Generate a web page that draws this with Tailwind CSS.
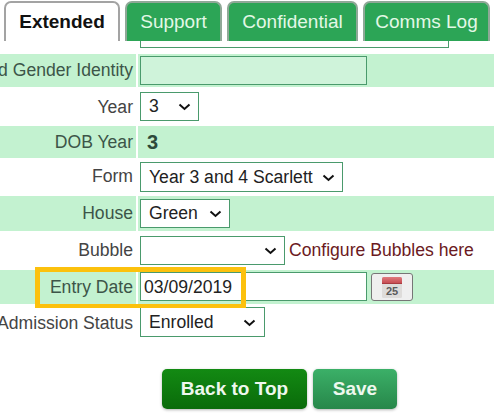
<!DOCTYPE html>
<html lang="en">
<head>
    <meta charset="UTF-8">
    <title>Extended</title>
    <script src="https://cdn.jsdelivr.net/npm/@tailwindcss/browser@4"></script>
</head>
<body class="bg-white w-[494px] h-[414px] overflow-hidden relative font-['Liberation_Sans',Arial,sans-serif] text-[17.6px] text-[#333]">
    <!-- tabs -->
    <div class="flex h-[41px] pt-[1px] pl-[4px] gap-[5px]">
        <div class="w-[116px] h-[40px] bg-white border-2 border-b-0 border-[#a3a3a3] rounded-t-[7px] flex items-center justify-center font-bold text-[#111] text-[19px]">Extended</div>
        <div class="w-[97px] h-[40px] bg-[#2ca556] border-2 border-b-0 border-[#8fa897] rounded-t-[7px] flex items-center justify-center text-[#e3f8e6] text-[19px]">Support</div>
        <div class="w-[131px] h-[40px] bg-[#2ca556] border-2 border-b-0 border-[#8fa897] rounded-t-[7px] flex items-center justify-center text-[#e3f8e6] text-[19px]">Confidential</div>
        <div class="w-[127px] h-[40px] bg-[#2ca556] border-2 border-b-0 border-[#8fa897] rounded-t-[7px] flex items-center justify-center text-[#e3f8e6] text-[19px]">Comms Log</div>
    </div>

    <!-- form rows -->
    <div class="flex h-[13px]">
        <div class="w-[136px]"></div>
        <div class="ml-[4px] w-[309px] h-[7px] border border-t-0 border-[#4a9a6c]"></div>
    </div>

    <div class="flex h-[33px] bg-[#c3f2d0]">
        <div class="w-[136px] shrink-0 flex justify-end items-center overflow-hidden whitespace-nowrap pr-[3px] text-[#3c5548]">Preferred Gender Identity</div>
        <div class="w-[2px] bg-white"></div>
        <div class="ml-[2px] mt-[2px] w-[227px] h-[29px] bg-[#cff3da] border border-[#4a9a6c]"></div>
    </div>

    <div class="flex h-[39px]">
        <div class="w-[136px] shrink-0 flex justify-end pt-[7px] pr-[3px] text-[#444]">Year</div>
        <div class="ml-[4px] mt-[5px] w-[59px] h-[29px] bg-white border border-[#4a9a6c] flex items-center justify-between pl-[8px] pr-[7px] text-[#222]">
            <span>3</span>
            <svg width="13" height="8" viewBox="0 0 13 8"><path d="M1.5 1.5 6.5 6 11.5 1.5" fill="none" stroke="#111" stroke-width="2"/></svg>
        </div>
    </div>

    <div class="flex h-[32px] bg-[#c3f2d0]">
        <div class="w-[136px] shrink-0 flex justify-end items-center pr-[3px] text-[#3c5548]">DOB Year</div>
        <div class="w-[2px] bg-white"></div>
        <div class="ml-[9px] flex items-center font-bold text-[20px] text-[#2d4a3a]">3</div>
    </div>

    <div class="flex h-[38px]">
        <div class="w-[136px] shrink-0 flex justify-end pt-[5px] pr-[3px] text-[#444]">Form</div>
        <div class="ml-[4px] mt-[4px] w-[203px] h-[30px] bg-white border border-[#4a9a6c] flex items-center justify-between pt-[1px] pl-[8px] pr-[7px] text-[#222]">
            <span class="whitespace-nowrap">Year 3 and 4 Scarlett</span>
            <svg width="13" height="8" viewBox="0 0 13 8"><path d="M1.5 1.5 6.5 6 11.5 1.5" fill="none" stroke="#111" stroke-width="2"/></svg>
        </div>
    </div>

    <div class="flex h-[35px] bg-[#c3f2d0]">
        <div class="w-[136px] shrink-0 flex justify-end pt-[4px] pr-[3px] text-[#3c5548]">House</div>
        <div class="w-[2px] bg-white"></div>
        <div class="ml-[2px] mt-[3px] w-[90px] h-[29px] bg-white border border-[#4a9a6c] flex items-center justify-between pl-[8px] pr-[7px] text-[#222]">
            <span>Green</span>
            <svg width="13" height="8" viewBox="0 0 13 8"><path d="M1.5 1.5 6.5 6 11.5 1.5" fill="none" stroke="#111" stroke-width="2"/></svg>
        </div>
    </div>

    <div class="flex h-[39px]">
        <div class="w-[136px] shrink-0 flex justify-end pt-[6px] pr-[3px] text-[#444]">Bubble</div>
        <div class="ml-[4px] mt-[5px] w-[145px] h-[29px] bg-white border border-[#4a9a6c] flex items-center justify-end pr-[7px]">
            <svg width="13" height="8" viewBox="0 0 13 8"><path d="M1.5 1.5 6.5 6 11.5 1.5" fill="none" stroke="#111" stroke-width="2"/></svg>
        </div>
        <div class="ml-[4px] pt-[6px] text-[#6b1a22] whitespace-nowrap">Configure Bubbles here</div>
    </div>

    <div class="flex h-[34px] bg-[#c3f2d0]">
        <div class="w-[136px] shrink-0 flex justify-end items-center pr-[3px] text-[#3c5548]">Entry Date</div>
        <div class="w-[2px] bg-white"></div>
        <div class="ml-[2px] mt-[2px] w-[227px] h-[29px] bg-white border border-[#4a9a6c] flex items-center pt-[1px] pl-[3px] text-[#222]">03/09/2019</div>
        <div class="ml-[4px] mt-[3px] w-[42px] h-[28px] bg-[#efefef] border border-[#767676] rounded-[3px] flex items-center justify-center">
            <svg width="22" height="23" viewBox="0 0 22 23">
                <defs>
                    <linearGradient id="calTop" x1="0" y1="0" x2="0" y2="1">
                        <stop offset="0" stop-color="#e07a7e"/>
                        <stop offset="1" stop-color="#c2454b"/>
                    </linearGradient>
                </defs>
                <rect x="1" y="1" width="20" height="21" rx="1.5" fill="#dedcda"/>
                <rect x="1" y="1" width="20" height="7" rx="1.5" fill="url(#calTop)"/>
                <rect x="1" y="7" width="20" height="1" fill="#a83b40"/>
                <text x="11" y="19" text-anchor="middle" font-family="Liberation Sans" font-weight="700" font-size="11" fill="#5a5a5a">25</text>
            </svg>
        </div>
    </div>

    <div class="flex h-[36px]">
        <div class="w-[136px] shrink-0 flex justify-end pt-[6px] pr-[3px] whitespace-nowrap text-[#444]">Admission Status</div>
        <div class="ml-[4px] mt-[3px] w-[125px] h-[30px] bg-white border border-[#4a9a6c] flex items-center justify-between pt-[1px] pl-[8px] pr-[8px] text-[#222]">
            <span>Enrolled</span>
            <svg width="13" height="8" viewBox="0 0 13 8"><path d="M1.5 1.5 6.5 6 11.5 1.5" fill="none" stroke="#111" stroke-width="2"/></svg>
        </div>
    </div>

    <!-- buttons -->
    <div class="flex mt-[29px] ml-[162px] gap-[6px]">
        <div class="w-[145px] h-[40px] rounded-[5px] bg-gradient-to-b from-[#138a13] to-[#0a6b0a] shadow-[0_1px_3px_rgba(0,0,0,0.3)] flex items-center justify-center font-bold text-[19px] text-[#eef8ee]">Back to Top</div>
        <div class="w-[84px] h-[40px] rounded-[5px] bg-gradient-to-b from-[#3bb068] to-[#27874a] shadow-[0_1px_3px_rgba(0,0,0,0.3)] flex items-center justify-center font-bold text-[19px] text-[#eef8ee]">Save</div>
    </div>

    <!-- highlight box over the entry date row -->
    <div class="absolute left-[35px] top-[267px] w-[211px] h-[41px] border-[5px] border-b-[4px] border-[#fcc10d]"></div>
</body>
</html>
